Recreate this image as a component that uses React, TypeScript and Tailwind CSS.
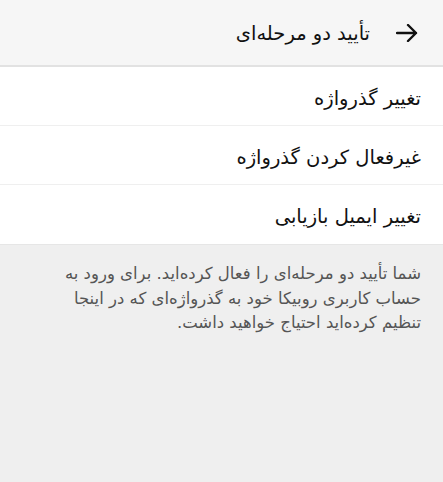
import React from "react";

const font = { fontFamily: '"DejaVu Sans", "Noto Sans", sans-serif' };

export default function App() {
  const rows = ["تغییر گذرواژه", "غیرفعال کردن گذرواژه", "تغییر ایمیل بازیابی"];
  return (
    <div dir="rtl" style={font} className="w-[443px] h-[482px] bg-[#efefef] flex flex-col">
      <div className="h-[67px] bg-[#f6f6f6] border-b-2 border-[#e2e2e2] flex items-center pr-[25px]">
        <svg width="22" height="18" viewBox="0 0 22 18" className="shrink-0">
          <path d="M1 9 H20 M12 1 L20 9 L12 17" fill="none" stroke="#111" strokeWidth="2.4" strokeLinecap="round" strokeLinejoin="round" />
        </svg>
        <span className="mr-[26px] pt-[2px] text-[19.5px] text-[#111]">تأیید دو مرحله‌ای</span>
      </div>
      <div className="bg-white flex flex-col border-b border-[#e6e6e6]">
        {rows.map((r, i) => (
          <div
            key={i}
            className={`h-[59px] flex items-center pr-[22px] pt-[5px] text-[19.5px] text-[#111] ${i < rows.length - 1 ? "border-b border-[#efefef]" : ""}`}
          >
            {r}
          </div>
        ))}
      </div>
      <p className="px-[22px] pt-[17px] text-[16.5px] leading-[24.5px] text-[#555]">
        شما تأیید دو مرحله‌ای را فعال کرده‌اید. برای ورود به
        <br />
        حساب کاربری روبیکا خود به گذرواژه‌ای که در اینجا
        <br />
        تنظیم کرده‌اید احتیاج خواهید داشت.
      </p>
    </div>
  );
}
